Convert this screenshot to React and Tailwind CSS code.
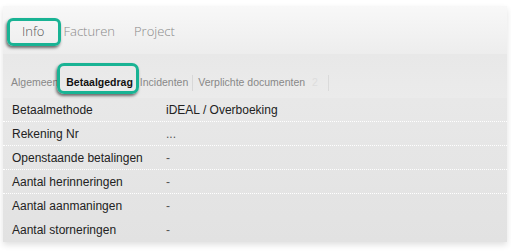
import React from 'react';

const rows = [
  ['Betaalmethode', 'iDEAL / Overboeking'],
  ['Rekening Nr', '...'],
  ['Openstaande betalingen', '-'],
  ['Aantal herinneringen', '-'],
  ['Aantal aanmaningen', '-', true],
  ['Aantal storneringen', '-', true],
];

const App = () => {
  return (
    <div className="w-[511px] h-[251px] bg-white pl-[3px] pt-[6px]">
      <div className="relative w-[504px] h-[236px] bg-gradient-to-b from-[#ececec] to-[#e2e2e2] shadow-[0_3px_6px_rgba(0,0,0,0.12)]">
        <div className="h-[48px] flex items-center gap-[19px] pl-[19px] pt-[4px] bg-gradient-to-b from-[#f8f8f8] to-[#ededed] font-['Open_Sans',sans-serif] font-light text-[13px] text-[#8a8a8a]">
          <span className="text-[#555]">Info</span>
          <span>Facturen</span>
          <span>Project</span>
        </div>
        <div className="h-[44px] bg-gradient-to-b from-[#e8e8e8] to-[#ebebeb] flex items-end pb-[5px] pl-[8px] font-['Liberation_Sans',sans-serif] text-[10.5px] text-[#888]">
          <div className="flex items-center h-[20px]">
            <span className="pr-[6px]">Algemeen</span>
            <span className="px-[2px] font-bold text-[#111]">Betaalgedrag</span>
            <span className="pl-[5px] pr-[4px] border-r border-[#d8d8d8]">Incidenten</span>
            <span className="pl-[5px]">Verplichte documenten</span>
            <span className="pl-[7px] pr-[10px] text-[#ddd] border-r border-[#dadada]">2</span>
          </div>
        </div>
        <div className="font-['Liberation_Sans',sans-serif] text-[12px] text-[#222]">
          {rows.map(([label, value, noLine], i) => (
            <div
              key={i}
              className={`h-[24px] flex items-center pl-[9px] ${noLine ? '' : 'border-b border-dotted border-white'}`}
            >
              <span className="w-[154px]">{label}</span>
              <span className={value === 'iDEAL / Overboeking' ? 'text-[#222]' : 'text-[#555]'}>{value}</span>
            </div>
          ))}
        </div>
        <div className="absolute left-[4px] top-[12px] w-[54px] h-[28px] rounded-[6px] border-[3px] border-[#19b394] shadow-[-1px_2px_3px_rgba(0,0,0,0.55)]"></div>
        <div className="absolute left-[54px] top-[57px] w-[82px] h-[31px] rounded-[7px] border-[3px] border-[#19b394] shadow-[-1px_2px_3px_rgba(0,0,0,0.55)]"></div>
      </div>
    </div>
  );
};

export default App;
